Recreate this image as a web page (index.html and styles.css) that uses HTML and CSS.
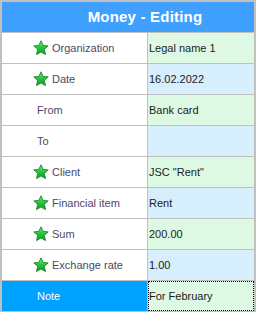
FILE: index.html
```html
<!DOCTYPE html>
<html lang="en">
<head>
    <meta charset="UTF-8">
    <meta name="viewport" content="width=device-width, initial-scale=1.0">
    <title>Money - Editing</title>
    <link rel="stylesheet" href="styles.css">
</head>
<body>
    <svg width="0" height="0" class="defs">
        <defs>
            <linearGradient id="estrella-grad" x1="0" y1="0" x2="0" y2="1">
                <stop offset="0" stop-color="#7ee87a"/>
                <stop offset="0.5" stop-color="#25c43a"/>
                <stop offset="1" stop-color="#119a2a"/>
            </linearGradient>
            <symbol id="estrella" viewBox="0 0 16 16">
                <path d="M8 0.8 L10.1 5.4 L15.2 5.9 L11.3 9.3 L12.5 14.6 L8 11.9 L3.5 14.6 L4.7 9.3 L0.8 5.9 L5.9 5.4 Z" fill="url(#estrella-grad)" stroke="#17862b" stroke-width="0.9" stroke-linejoin="round"/>
            </symbol>
        </defs>
    </svg>

    <div class="formulario">
        <div class="titulo">Money - Editing</div>

        <div class="fila">
            <div class="etiqueta"><svg class="estrella"><use href="#estrella"/></svg>Organization</div>
            <div class="valor verde">Legal name 1</div>
        </div>
        <div class="fila">
            <div class="etiqueta"><svg class="estrella"><use href="#estrella"/></svg>Date</div>
            <div class="valor azul">16.02.2022</div>
        </div>
        <div class="fila">
            <div class="etiqueta sin-estrella">From</div>
            <div class="valor verde">Bank card</div>
        </div>
        <div class="fila">
            <div class="etiqueta sin-estrella">To</div>
            <div class="valor azul"></div>
        </div>
        <div class="fila">
            <div class="etiqueta"><svg class="estrella"><use href="#estrella"/></svg>Client</div>
            <div class="valor verde">JSC "Rent"</div>
        </div>
        <div class="fila">
            <div class="etiqueta"><svg class="estrella"><use href="#estrella"/></svg>Financial item</div>
            <div class="valor azul">Rent</div>
        </div>
        <div class="fila">
            <div class="etiqueta"><svg class="estrella"><use href="#estrella"/></svg>Sum</div>
            <div class="valor verde">200.00</div>
        </div>
        <div class="fila">
            <div class="etiqueta"><svg class="estrella"><use href="#estrella"/></svg>Exchange rate</div>
            <div class="valor azul">1.00</div>
        </div>
        <div class="fila fila-activa">
            <div class="etiqueta sin-estrella">Note</div>
            <div class="valor verde foco">For February</div>
        </div>
    </div>
</body>
</html>
```
FILE: styles.css
```css
body {
    margin: 0;
    font-family: "Liberation Sans", Arial, sans-serif;
    font-size: 11px;
}

.defs {
    position: absolute;
}

.formulario {
    width: 256px;
    height: 312px;
    box-sizing: border-box;
    border: 2px solid #c0c0c0;
    background-color: #c0c0c0;
}

.titulo {
    height: 30px;
    line-height: 30px;
    background-color: #40a0ff;
    color: #fff;
    font-weight: bold;
    font-size: 15px;
    letter-spacing: 0.2px;
    text-align: center;
    padding-left: 34px;
    border-bottom: 1px solid #c0c0c0;
}

.fila {
    display: grid;
    grid-template-columns: 145px 1fr;
    column-gap: 1px;
    height: 30px;
    margin-bottom: 1px;
}

.etiqueta {
    display: flex;
    align-items: center;
    background-color: #fff;
    color: #4a4a66;
    padding-left: 31px;
}

.sin-estrella {
    padding-left: 35px;
}

.estrella {
    width: 16px;
    height: 16px;
    margin-right: 3px;
}

.valor {
    display: flex;
    align-items: center;
    padding-left: 1px;
    color: #1c1c1c;
}

.verde {
    background-color: #ddf9e3;
}

.azul {
    background-color: #d7eefc;
}

.fila-activa .etiqueta {
    background-color: #00a2ff;
    color: #fff;
}

.foco {
    outline: 1px dotted #000;
    outline-offset: -1px;
}
```
